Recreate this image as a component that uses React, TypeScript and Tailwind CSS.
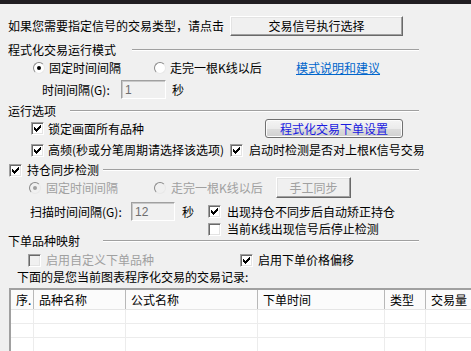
import React from 'react';

const Check = ({ checked = false, disabled = false }: { checked?: boolean; disabled?: boolean }) => (
  <span
    className={`flex h-[13px] w-[13px] shrink-0 items-center justify-center border border-t-[#a0a0a0] border-l-[#a0a0a0] border-r-white border-b-white shadow-[inset_1px_1px_0_#696969,inset_-1px_-1px_0_#e3e3e3] ${
      disabled ? 'bg-[#f0f0f0]' : 'bg-white'
    }`}
  >
    {checked && (
      <svg width="9" height="9" viewBox="0 0 9 9" shapeRendering="crispEdges">
        <path
          d="M1 3h1v3H1zM2 4h1v3H2zM3 5h1v3H3zM4 4h1v3H4zM5 3h1v3H5zM6 2h1v3H6zM7 1h1v3H7z"
          fill={disabled ? '#a0a0a0' : '#000'}
        />
      </svg>
    )}
  </span>
);

const Radio = ({ checked = false, disabled = false }: { checked?: boolean; disabled?: boolean }) => (
  <span
    className={`flex h-[12px] w-[12px] shrink-0 items-center justify-center rounded-full border border-t-[#8a8a8a] border-l-[#8a8a8a] border-r-[#e8e8e8] border-b-[#e8e8e8] ${
      disabled ? 'bg-[#f0f0f0]' : 'bg-white'
    }`}
  >
    {checked && <span className={`h-[4px] w-[4px] rounded-full ${disabled ? 'bg-[#a0a0a0]' : 'bg-black'}`} />}
  </span>
);

const Groove = ({ className = '' }: { className?: string }) => (
  <div className={`h-[2px] flex-1 border-t border-b border-t-[#a0a0a0] border-b-white ${className}`} />
);

const ClassicButton = ({ label, className = '', disabled = false }: { label: string; className?: string; disabled?: boolean }) => (
  <div
    className={`flex items-center justify-center border border-t-white border-l-white border-r-[#696969] border-b-[#696969] bg-[#f0f0f0] shadow-[inset_-1px_-1px_0_#a0a0a0,inset_1px_1px_0_#e3e3e3] ${
      disabled ? 'text-[#a0a0a0]' : 'text-black'
    } ${className}`}
  >
    {label}
  </div>
);

const Field = ({ value, className = '' }: { value: string; className?: string }) => (
  <div
    className={`flex h-[19px] items-center border border-t-[#a0a0a0] border-l-[#a0a0a0] border-r-white border-b-white bg-[#f0f0f0] pl-[3px] font-['Liberation_Sans',sans-serif] text-[#6d6d6d] shadow-[inset_1px_1px_0_#c8c8c8] ${className}`}
  >
    {value}
  </div>
);

const columns = [
  { title: '序.', w: 'w-[23px]', pl: 'pl-[5px]' },
  { title: '品种名称', w: 'w-[92px]', pl: 'pl-[5px]' },
  { title: '公式名称', w: 'w-[132px]', pl: 'pl-[5px]' },
  { title: '下单时间', w: 'w-[127px]', pl: 'pl-[5px]' },
  { title: '类型', w: 'w-[41px]', pl: 'pl-[5px]' },
  { title: '交易量', w: 'w-[60px]', pl: 'pl-[5px]' },
];

export default function App() {
  return (
    <div className="flex h-[351px] w-[471px] flex-col overflow-hidden bg-[#f0f0f0] font-['Noto_Sans_CJK_SC',sans-serif] text-[12px] leading-[14px] text-black">
      <div className="h-[4px] shrink-0 bg-[#211e22]" />

      {/* signal type */}
      <div className="mt-[12px] flex h-[20px] items-center pl-[8px]">
        <span className="w-[222px]">如果您需要指定信号的交易类型，请点击</span>
        <ClassicButton label="交易信号执行选择" className="h-[20px] w-[173px]" />
      </div>

      {/* 运行模式 */}
      <div className="mt-[7px] flex h-[14px] w-[419px] items-center pl-[8px]">
        <span>程式化交易运行模式</span>
        <Groove className="ml-[16px]" />
      </div>
      <div className="mt-[4px] flex h-[14px] items-center pl-[33px]">
        <Radio checked />
        <span className="ml-[4px] w-[105px]">固定时间间隔</span>
        <Radio />
        <span className="ml-[4px] w-[126px]">走完一根K线以后</span>
        <span className="text-[#0066cc] underline">模式说明和建议</span>
      </div>
      <div className="mt-[5px] flex h-[19px] items-center pl-[42px]">
        <span className="w-[79px]">时间间隔(G):</span>
        <Field value="1" className="w-[45px]" />
        <span className="ml-[6px]">秒</span>
      </div>

      {/* 运行选项 */}
      <div className="mt-[5px] flex h-[14px] w-[419px] items-center pl-[8px]">
        <span>运行选项</span>
        <Groove className="ml-[14px]" />
      </div>
      <div className="mt-[1px] flex h-[20px] items-center pl-[31px]">
        <Check checked />
        <span className="ml-[4px] w-[217px]">锁定画面所有品种</span>
        <div className="flex h-[19px] w-[138px] items-center justify-center self-start rounded-[3px] border border-[#707070] bg-[linear-gradient(#f4f4f4,#ebebeb_50%,#dddddd_50%,#d0d0d0)] text-[#1a1ae0] shadow-[inset_0_0_0_1px_#fcfcfc]">
          程式化交易下单设置
        </div>
      </div>
      <div className="mt-[5px] flex h-[14px] items-center pl-[31px]">
        <Check checked />
        <span className="ml-[4px] w-[182px] whitespace-nowrap">高频(秒或分笔周期请选择该选项)</span>
        <Check checked />
        <span className="ml-[6px]">启动时检测是否对上根K信号交易</span>
      </div>

      {/* 持仓同步检测 */}
      <div className="mt-[7px] flex h-[12px] w-[419px] items-center pl-[9px]">
        <Check checked />
        <span className="ml-[5px]">持仓同步检测</span>
        <Groove className="ml-[4px]" />
      </div>
      <div className="mt-[1px] flex h-[21px] items-center pl-[29px] text-[#a0a0a0]">
        <Radio checked disabled />
        <span className="ml-[5px] w-[108px]">固定时间间隔</span>
        <Radio disabled />
        <span className="ml-[5px] w-[105px]">走完一根K线以后</span>
        <ClassicButton label="手工同步" disabled className="h-[21px] w-[75px]" />
      </div>
      <div className="mt-[4px] flex h-[19px] items-center pl-[30px]">
        <span className="w-[101px]">扫描时间间隔(G):</span>
        <Field value="12" className="w-[44px]" />
        <span className="ml-[7px] w-[26px]">秒</span>
        <Check checked />
        <span className="ml-[6px]">出现持仓不同步后自动矫正持仓</span>
      </div>
      <div className="mt-[2px] flex h-[12px] items-center pl-[208px]">
        <Check />
        <span className="ml-[6px]">当前K线出现信号后停止检测</span>
      </div>

      {/* 下单品种映射 */}
      <div className="flex h-[12px] w-[419px] items-center pl-[8px]">
        <span>下单品种映射</span>
        <Groove className="ml-[23px]" />
      </div>
      <div className="mt-[6px] flex h-[14px] items-center pl-[28px]">
        <Check disabled />
        <span className="ml-[5px] w-[194px] text-[#a0a0a0]">启用自定义下单品种</span>
        <Check checked />
        <span className="ml-[5px]">启用下单价格偏移</span>
      </div>
      <div className="mt-[3px] flex h-[14px] items-center pl-[17px]">下面的是您当前图表程序化交易的交易记录:</div>

      {/* records table */}
      <div className="ml-[9px] mt-[4px] w-[480px] flex-1 border-t-2 border-l-2 border-t-[#a0a0a0] border-l-[#a0a0a0] bg-white">
        <div className="flex h-[20px] border-b border-[#e5e5e5] bg-[#fbfbfb]">
          {columns.map((c) => (
            <div key={c.title} className={`flex shrink-0 items-center border-r border-r-[#b8b8b8] ${c.w} ${c.pl}`}>
              {c.title}
            </div>
          ))}
        </div>
        {[0, 1, 2].map((r) => (
          <div key={r} className="flex h-[14px] border-b border-[#ececec]">
            {columns.map((c) => (
              <div key={c.title} className={`shrink-0 border-r border-[#ececec] ${c.w}`} />
            ))}
          </div>
        ))}
      </div>
    </div>
  );
}
